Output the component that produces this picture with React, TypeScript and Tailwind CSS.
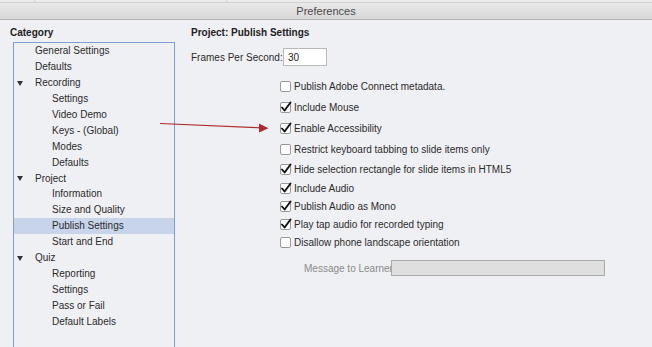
import React from "react";

type Item = { label: string; level: 1 | 2; group?: boolean; selected?: boolean };

const categories: Item[] = [
  { label: "General Settings", level: 1 },
  { label: "Defaults", level: 1 },
  { label: "Recording", level: 1, group: true },
  { label: "Settings", level: 2 },
  { label: "Video Demo", level: 2 },
  { label: "Keys - (Global)", level: 2 },
  { label: "Modes", level: 2 },
  { label: "Defaults", level: 2 },
  { label: "Project", level: 1, group: true },
  { label: "Information", level: 2 },
  { label: "Size and Quality", level: 2 },
  { label: "Publish Settings", level: 2, selected: true },
  { label: "Start and End", level: 2 },
  { label: "Quiz", level: 1, group: true },
  { label: "Reporting", level: 2 },
  { label: "Settings", level: 2 },
  { label: "Pass or Fail", level: 2 },
  { label: "Default Labels", level: 2 },
];

const options = [
  { label: "Publish Adobe Connect metadata.", checked: false, h: "h-[21px]" },
  { label: "Include Mouse", checked: true, h: "h-[21px]" },
  { label: "Enable Accessibility", checked: true, h: "h-[21px]" },
  { label: "Restrict keyboard tabbing to slide items only", checked: false, h: "h-[21px]" },
  { label: "Hide selection rectangle for slide items in HTML5", checked: true, h: "h-[20px]" },
  { label: "Include Audio", checked: true, h: "h-[18px]" },
  { label: "Publish Audio as Mono", checked: true, h: "h-[18px]" },
  { label: "Play tap audio for recorded typing", checked: true, h: "h-[18px]" },
  { label: "Disallow phone landscape orientation", checked: false, h: "h-[18px]" },
];

function Checkbox({ checked }: { checked: boolean }) {
  return (
    <div className="relative w-[11px] h-[11px] bg-white border border-[#9a9a9a] rounded-[2px] shrink-0">
      {checked && (
        <svg className="absolute -left-[1px] -top-[2px] w-[12px] h-[12px]" viewBox="0 0 12 12">
          <path d="M2 6.5 L4.6 9.5 L10.5 1.5" fill="none" stroke="#111" strokeWidth={1.9} strokeLinecap="round" strokeLinejoin="round" />
        </svg>
      )}
    </div>
  );
}

export default function App() {
  return (
    <div
      className="relative w-[652px] h-[347px] overflow-hidden bg-[#eff0f4] text-[10px] text-[#2b2b2b]"
      style={{ fontFamily: '"Liberation Sans", Arial, sans-serif' }}
    >
      {/* window chrome */}
      <div className="h-[3px] bg-[#ebebeb] border-b border-[#d2d2d2] flex">
        <div className="w-[35px] border-r border-[#d6d6d6]" />
        <div className="w-[192px] border-r border-[#d6d6d6]" />
      </div>
      <div className="h-[17px] bg-gradient-to-b from-[#e9e9e9] to-[#d7d7d7] border-b border-[#b4b4b4] flex items-center justify-center">
        <span className="text-[11px] text-[#4a4a4a]">Preferences</span>
      </div>

      <div className="flex">
        {/* left: category tree */}
        <div className="w-[181px] pl-[10px] shrink-0">
          <div className="mt-[6px] h-[14px] leading-[14px] font-bold text-[#222]">Category</div>
          <div className="mt-[2px] ml-[3px] w-[162px] h-[320px] border border-[#7e9fd6]">
            {categories.map((c, i) => (
              <div
                key={i}
                className={`relative h-[15.9px] flex items-center ${c.selected ? "bg-[#c7d4ea]" : ""} ${c.level === 1 ? "pl-[21px]" : "pl-[38px]"}`}
              >
                {c.group && (
                  <span className="absolute left-[3px] top-[6px] w-0 h-0 border-l-[3px] border-r-[3px] border-t-[5px] border-l-transparent border-r-transparent border-t-[#333]" />
                )}
                <span>{c.label}</span>
              </div>
            ))}
          </div>
        </div>

        {/* right: settings */}
        <div className="pl-[10px] flex-1">
          <div className="mt-[6px] h-[14px] leading-[14px] font-bold text-[#222]">Project: Publish Settings</div>
          <div className="mt-[8px] flex items-center h-[18px]">
            <span className="w-[92px] whitespace-nowrap">Frames Per Second:</span>
            <div className="w-[44px] h-[18px] bg-white border border-[#b9b9b9] flex items-center pl-[4px] text-[#222]">30</div>
          </div>
          <div className="mt-[9.5px] pl-[89px]">
            {options.map((o, i) => (
              <div key={i} className={`${o.h} flex items-center gap-[3px] whitespace-nowrap`}>
                <Checkbox checked={o.checked} />
                <span>{o.label}</span>
              </div>
            ))}
            <div className="mt-[8.5px] flex items-center h-[16px] pl-[24px]">
              <span className="w-[87px] shrink-0 whitespace-nowrap text-[#8a8a8a]">Message to Learner</span>
              <div className="w-[214px] h-[16px] shrink-0 bg-[#dfdfdf] border border-[#a9a9a9]" />
            </div>
          </div>
        </div>
      </div>

      {/* annotation arrow */}
      <svg className="absolute left-0 top-0 pointer-events-none" width={652} height={347}>
        <line x1={160} y1={123.5} x2={261} y2={127.8} stroke="#b02a2a" strokeWidth={1.2} />
        <polygon points="259,123.5 268.5,128.2 259,132.5" fill="#b02a2a" />
      </svg>
    </div>
  );
}
